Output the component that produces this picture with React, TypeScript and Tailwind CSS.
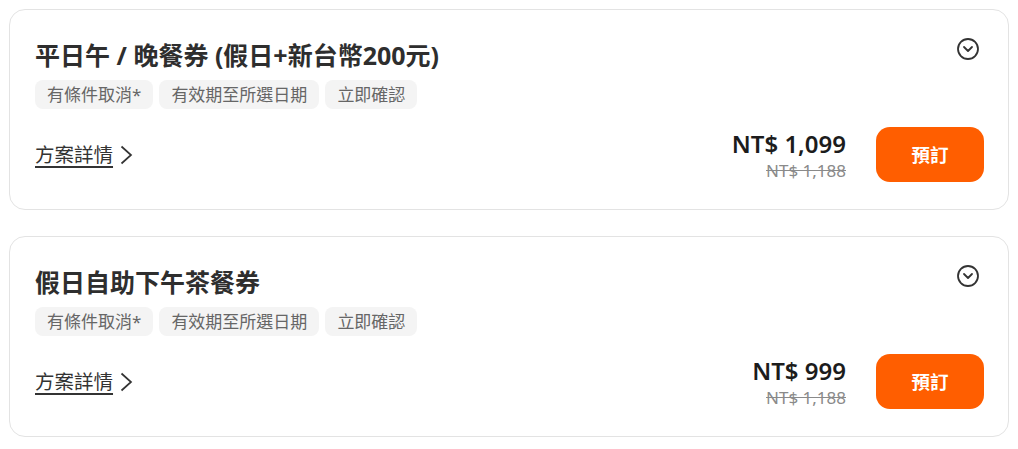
import { CircleChevronDown } from 'lucide-react';

interface Plan {
  title: string;
  price: string;
  original: string;
}

const plans: Plan[] = [
  { title: '平日午 / 晚餐券 (假日+新台幣200元)', price: 'NT$ 1,099', original: 'NT$ 1,188' },
  { title: '假日自助下午茶餐券', price: 'NT$ 999', original: 'NT$ 1,188' },
];

const tags = ['有條件取消*', '有效期至所選日期', '立即確認'];

function PlanCard({ plan }: { plan: Plan }) {
  return (
    <div className="rounded-[16px] border border-[#e3e3e3] bg-white pl-[25px] pr-[24px] pt-[29px] pb-[27px]">
      <div className="flex items-start justify-between">
        <h3 className="text-[25px] leading-[33px] font-bold text-[#2e2e2e]">{plan.title}</h3>
        <CircleChevronDown className="w-6 h-6 mt-[-2px] mr-[4px] text-[#333]" strokeWidth={1.8} />
      </div>

      <div className="flex gap-[6px] mt-[8px]">
        {tags.map((t) => (
          <span
            key={t}
            className="h-[29px] px-[12px] flex items-center rounded-[8px] bg-[#f4f4f4] text-[17px] text-[#666]"
          >
            {t}
          </span>
        ))}
      </div>

      <div className="flex items-center justify-between mt-[18px]">
        <a className="flex items-center gap-[7px] text-[19.5px] text-[#333] cursor-pointer">
          <span className="underline underline-offset-[4px] decoration-[1.5px]">方案詳情</span>
          <svg width="13" height="20" viewBox="0 0 13 20" fill="none" stroke="#333" strokeWidth="1.7">
            <polyline points="1.5,1.5 11,10 1.5,18.5" />
          </svg>
        </a>

        <div className="flex items-center gap-[30px]">
          <div className="flex flex-col items-end">
            <span className="text-[24px] leading-[30px] font-semibold text-[#1c1c1c]">{plan.price}</span>
            <span className="text-[17px] leading-[20px] mt-[2px] text-[#8a8a8a] line-through">{plan.original}</span>
          </div>
          <button className="w-[108px] h-[55px] rounded-[14px] bg-[#ff5e00] text-white text-[18.5px] font-bold">
            預訂
          </button>
        </div>
      </div>
    </div>
  );
}

export default function App() {
  return (
    <div
      className="w-[1018px] h-[449px] bg-white pl-[9px] pr-[9px] pt-[9px] flex flex-col gap-[26px]"
      style={{ fontFamily: '"Noto Sans", "Noto Sans CJK TC", sans-serif' }}
    >
      {plans.map((p) => (
        <PlanCard key={p.title} plan={p} />
      ))}
    </div>
  );
}
